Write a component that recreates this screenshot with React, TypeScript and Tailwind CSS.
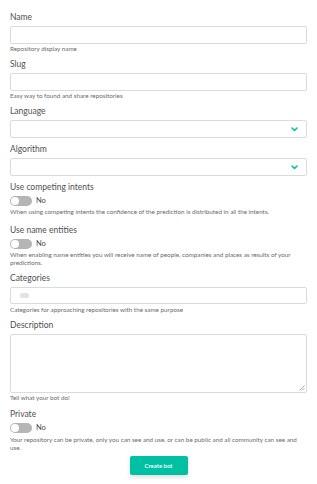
import React from "react";

const font = { fontFamily: "Lato, 'Noto Sans', sans-serif" };

function Label({ children }: { children: React.ReactNode }) {
  return <div className="text-[8.5px] leading-[10px] text-[#505050] mb-[4px]">{children}</div>;
}

function Help({ children, mt = "mt-[1px]" }: { children: React.ReactNode; mt?: string }) {
  return <div className={`text-[6.3px] leading-[8px] text-[#6b6b6b] pr-[8px] ${mt}`}>{children}</div>;
}

function Input() {
  return <div className="h-[18px] border border-[#dbdbdb] rounded-[2px] bg-white" />;
}

function Select() {
  return (
    <div className="h-[18px] border border-[#dbdbdb] rounded-[2px] bg-white flex items-center justify-end pr-[8px]">
      <svg width="7" height="5" viewBox="0 0 7 5">
        <path d="M1 1 L3.5 3.5 L6 1" stroke="#00c4a7" strokeWidth="1.6" fill="none" strokeLinecap="round" strokeLinejoin="round" />
      </svg>
    </div>
  );
}

function Toggle() {
  return (
    <div className="flex items-center gap-[4px] h-[10px]">
      <div className="w-[22px] h-[10px] rounded-full bg-[#b5b5b5] relative">
        <div className="absolute left-[1px] top-[1px] w-[8px] h-[8px] rounded-full bg-white" />
      </div>
      <span className="text-[7.5px] leading-[10px] text-[#4a4a4a]">No</span>
    </div>
  );
}

export default function App() {
  return (
    <div className="w-[317px] h-[484px] bg-white px-[10px] pt-[12px] flex flex-col gap-[6px] overflow-hidden" style={font}>
      <div>
        <Label>Name</Label>
        <Input />
        <Help>Repository display name</Help>
      </div>
      <div>
        <Label>Slug</Label>
        <Input />
        <Help>Easy way to found and share repositories</Help>
      </div>
      <div>
        <Label>Language</Label>
        <Select />
      </div>
      <div>
        <Label>Algorithm</Label>
        <Select />
      </div>
      <div className="mb-[3px]">
        <Label>Use competing intents</Label>
        <Toggle />
        <Help mt="mt-[2px]">When using competing intents the confidence of the prediction is distributed in all the intents.</Help>
      </div>
      <div>
        <Label>Use name entities</Label>
        <Toggle />
        <Help mt="mt-[2px]">
          When enabling name entities you will receive name of people, companies and places as results of your predictions.
        </Help>
      </div>
      <div>
        <Label>Categories</Label>
        <div className="h-[17px] border border-[#dbdbdb] rounded-[2px] bg-white flex items-center pl-[9px]">
          <div className="w-[9px] h-[5px] rounded-[2px] bg-[#e2e2e2]" />
        </div>
        <Help mt="mt-[2px]">Categories for approaching repositories with the same purpose</Help>
      </div>
      <div className="mb-[1px]">
        <Label>Description</Label>
        <div className="h-[59px] border border-[#dbdbdb] rounded-[2px] bg-white relative">
          <svg className="absolute right-[1px] bottom-[1px]" width="6" height="6" viewBox="0 0 6 6">
            <path d="M5.5 0.5 L0.5 5.5 M5.5 3 L3 5.5" stroke="#777" strokeWidth="0.6" />
          </svg>
        </div>
        <Help>Tell what your bot do!</Help>
      </div>
      <div>
        <Label>Private</Label>
        <Toggle />
        <Help mt="mt-[3px]">
          Your repository can be private, only you can see and use, or can be public and all community can see and use.
        </Help>
      </div>
      <div className="flex justify-center -mt-[2px]">
        <button className="w-[58px] h-[19px] rounded-[2px] bg-[#00c0a3] text-white text-[6px] font-semibold shadow-[0_2px_4px_rgba(0,0,0,0.15)]">
          Create bot
        </button>
      </div>
    </div>
  );
}
